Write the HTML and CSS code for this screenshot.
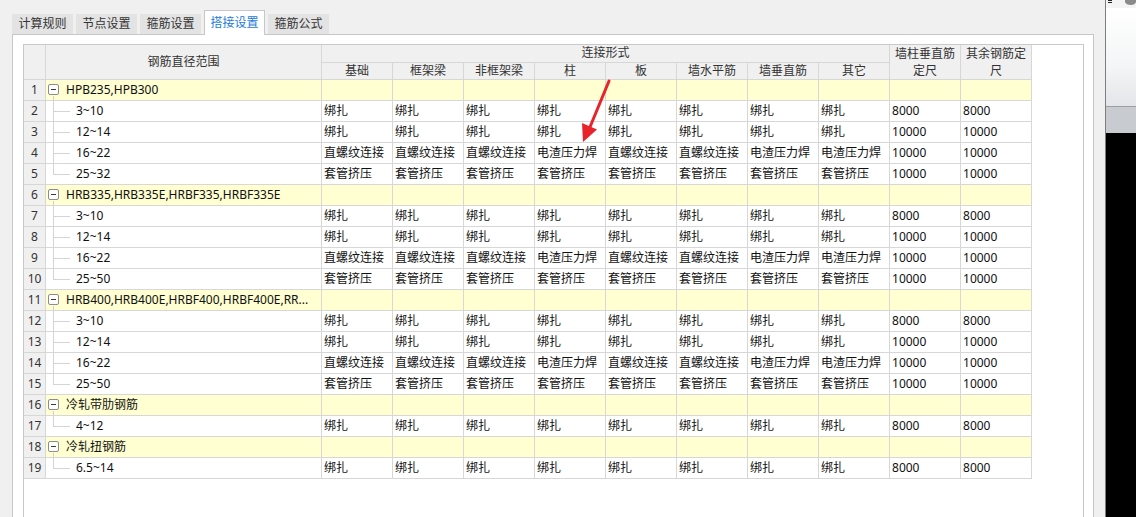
FILE: index.html
```html
<!DOCTYPE html>
<html lang="zh-CN">
<head>
<meta charset="utf-8">
<title>搭接设置</title>
<link rel="stylesheet" href="styles.css">
</head>
<body>
<div class="main">
  <div class="tabs">
    <div class="tab">计算规则</div>
    <div class="tab">节点设置</div>
    <div class="tab">箍筋设置</div>
    <div class="tab active">搭接设置</div>
    <div class="tab">箍筋公式</div>
  </div>
  <div class="panel">
    <div class="grid">
      <table class="sheet">
        <colgroup>
          <col class="c-num"><col class="c-name">
          <col class="c-w"><col class="c-w"><col class="c-w"><col class="c-w"><col class="c-w">
          <col class="c-w"><col class="c-w"><col class="c-w"><col class="c-w"><col class="c-w">
        </colgroup>
        <thead>
          <tr class="h1">
            <th rowspan="2" class="num"></th>
            <th rowspan="2">钢筋直径范围</th>
            <th colspan="8">连接形式</th>
            <th rowspan="2" class="wrap">墙柱垂直筋定尺</th>
            <th rowspan="2" class="wrap">其余钢筋定尺</th>
          </tr>
          <tr class="h2">
            <th>基础</th><th>框架梁</th><th>非框架梁</th><th>柱</th><th>板</th><th>墙水平筋</th><th>墙垂直筋</th><th>其它</th>
          </tr>
        </thead>
        <tbody>
          <tr class="group"><td class="num">1</td><td class="name"><span class="box"></span>HPB235,HPB300</td><td></td><td></td><td></td><td></td><td></td><td></td><td></td><td></td><td></td><td></td></tr>
          <tr><td class="num">2</td><td class="name child">3~10</td><td>绑扎</td><td>绑扎</td><td>绑扎</td><td>绑扎</td><td>绑扎</td><td>绑扎</td><td>绑扎</td><td>绑扎</td><td>8000</td><td>8000</td></tr>
          <tr><td class="num">3</td><td class="name child">12~14</td><td>绑扎</td><td>绑扎</td><td>绑扎</td><td>绑扎</td><td>绑扎</td><td>绑扎</td><td>绑扎</td><td>绑扎</td><td>10000</td><td>10000</td></tr>
          <tr><td class="num">4</td><td class="name child">16~22</td><td>直螺纹连接</td><td>直螺纹连接</td><td>直螺纹连接</td><td>电渣压力焊</td><td>直螺纹连接</td><td>直螺纹连接</td><td>电渣压力焊</td><td>电渣压力焊</td><td>10000</td><td>10000</td></tr>
          <tr><td class="num">5</td><td class="name child last">25~32</td><td>套管挤压</td><td>套管挤压</td><td>套管挤压</td><td>套管挤压</td><td>套管挤压</td><td>套管挤压</td><td>套管挤压</td><td>套管挤压</td><td>10000</td><td>10000</td></tr>

          <tr class="group"><td class="num">6</td><td class="name"><span class="box"></span>HRB335,HRB335E,HRBF335,HRBF335E</td><td></td><td></td><td></td><td></td><td></td><td></td><td></td><td></td><td></td><td></td></tr>
          <tr><td class="num">7</td><td class="name child">3~10</td><td>绑扎</td><td>绑扎</td><td>绑扎</td><td>绑扎</td><td>绑扎</td><td>绑扎</td><td>绑扎</td><td>绑扎</td><td>8000</td><td>8000</td></tr>
          <tr><td class="num">8</td><td class="name child">12~14</td><td>绑扎</td><td>绑扎</td><td>绑扎</td><td>绑扎</td><td>绑扎</td><td>绑扎</td><td>绑扎</td><td>绑扎</td><td>10000</td><td>10000</td></tr>
          <tr><td class="num">9</td><td class="name child">16~22</td><td>直螺纹连接</td><td>直螺纹连接</td><td>直螺纹连接</td><td>电渣压力焊</td><td>直螺纹连接</td><td>直螺纹连接</td><td>电渣压力焊</td><td>电渣压力焊</td><td>10000</td><td>10000</td></tr>
          <tr><td class="num">10</td><td class="name child last">25~50</td><td>套管挤压</td><td>套管挤压</td><td>套管挤压</td><td>套管挤压</td><td>套管挤压</td><td>套管挤压</td><td>套管挤压</td><td>套管挤压</td><td>10000</td><td>10000</td></tr>

          <tr class="group"><td class="num">11</td><td class="name"><span class="box"></span>HRB400,HRB400E,HRBF400,HRBF400E,RR...</td><td></td><td></td><td></td><td></td><td></td><td></td><td></td><td></td><td></td><td></td></tr>
          <tr><td class="num">12</td><td class="name child">3~10</td><td>绑扎</td><td>绑扎</td><td>绑扎</td><td>绑扎</td><td>绑扎</td><td>绑扎</td><td>绑扎</td><td>绑扎</td><td>8000</td><td>8000</td></tr>
          <tr><td class="num">13</td><td class="name child">12~14</td><td>绑扎</td><td>绑扎</td><td>绑扎</td><td>绑扎</td><td>绑扎</td><td>绑扎</td><td>绑扎</td><td>绑扎</td><td>10000</td><td>10000</td></tr>
          <tr><td class="num">14</td><td class="name child">16~22</td><td>直螺纹连接</td><td>直螺纹连接</td><td>直螺纹连接</td><td>电渣压力焊</td><td>直螺纹连接</td><td>直螺纹连接</td><td>电渣压力焊</td><td>电渣压力焊</td><td>10000</td><td>10000</td></tr>
          <tr><td class="num">15</td><td class="name child last">25~50</td><td>套管挤压</td><td>套管挤压</td><td>套管挤压</td><td>套管挤压</td><td>套管挤压</td><td>套管挤压</td><td>套管挤压</td><td>套管挤压</td><td>10000</td><td>10000</td></tr>

          <tr class="group"><td class="num">16</td><td class="name"><span class="box"></span>冷轧带肋钢筋</td><td></td><td></td><td></td><td></td><td></td><td></td><td></td><td></td><td></td><td></td></tr>
          <tr><td class="num">17</td><td class="name child last">4~12</td><td>绑扎</td><td>绑扎</td><td>绑扎</td><td>绑扎</td><td>绑扎</td><td>绑扎</td><td>绑扎</td><td>绑扎</td><td>8000</td><td>8000</td></tr>

          <tr class="group"><td class="num">18</td><td class="name"><span class="box"></span>冷轧扭钢筋</td><td></td><td></td><td></td><td></td><td></td><td></td><td></td><td></td><td></td><td></td></tr>
          <tr><td class="num">19</td><td class="name child last">6.5~14</td><td>绑扎</td><td>绑扎</td><td>绑扎</td><td>绑扎</td><td>绑扎</td><td>绑扎</td><td>绑扎</td><td>绑扎</td><td>8000</td><td>8000</td></tr>
        </tbody>
      </table>
    </div>
  </div>
</div>
<div class="side">
  <div class="side-top">
    <svg class="side-icons" width="29" height="8" viewBox="0 0 29 8">
      <rect x="1" y="0" width="4" height="1" fill="#222"/>
      <rect x="1" y="2" width="4" height="1" fill="#222"/>
      <path d="M18 0 H29 V2 Q28 5 24 5 Q19 5 18 2 Z" fill="#8a8a8a"/>
    </svg>
  </div>
  <div class="side-light"></div>
  <div class="side-bar"></div>
  <div class="side-dark"></div>
</div>
<svg class="arrow" width="1136" height="517" viewBox="0 0 1136 517">
  <line x1="609" y1="81" x2="590" y2="127" stroke="#e8242a" stroke-width="3" stroke-linecap="round"/>
  <polygon points="583,142 582,123 597,129.5" fill="#e8242a"/>
</svg>
</body>
</html>
```
FILE: styles.css
```css
html, body {
  margin: 0;
  padding: 0;
}
body {
  position: relative;
  width: 1136px;
  height: 517px;
  overflow: hidden;
  display: flex;
  background: #f0f0f0;
  font-family: "Noto Sans", "Noto Sans CJK SC", sans-serif;
  font-size: 12px;
  color: #111;
}
.main {
  width: 1105px;
  flex: none;
  box-sizing: border-box;
  padding: 10px 11px 0 12px;
  display: flex;
  flex-direction: column;
}
.tabs {
  display: flex;
  align-items: flex-end;
  gap: 3px;
  height: 24px;
  flex: none;
}
.tab {
  box-sizing: border-box;
  width: 61px;
  height: 20px;
  line-height: 20px;
  text-align: center;
  background: #e3e3e3;
  color: #333;
  white-space: nowrap;
}
.tab.active {
  position: relative;
  height: 25px;
  margin-bottom: -1px;
  line-height: 23px;
  background: #fff;
  border: 1px solid #c6c6cc;
  border-bottom: none;
  color: #1e7bd8;
}
.panel {
  flex: 1;
  background: #fff;
  border: 1px solid #c6c6cc;
  border-bottom: none;
  padding: 9px 9px 0 10px;
  display: flex;
  flex-direction: column;
}
.grid {
  flex: 1;
  border: 1px solid #c9c9c9;
  border-bottom: none;
  background: #fff;
}
.sheet {
  table-layout: fixed;
  border-collapse: separate;
  border-spacing: 0;
  width: 1008px;
}
.c-num { width: 22px; }
.c-name { width: 276px; }
.c-w { width: 71px; }
.sheet th, .sheet td {
  box-sizing: border-box;
  border-right: 1px solid #d7d7d7;
  border-bottom: 1px solid #d7d7d7;
  padding: 0 2px;
  white-space: nowrap;
  overflow: hidden;
}
.sheet th {
  background: #f0f0f0;
  color: #333;
  font-weight: normal;
  text-align: center;
  height: 17px;
  line-height: 16px;
}
.sheet th.wrap {
  white-space: normal;
  line-height: 17px;
  padding: 0;
}
.sheet td {
  height: 21px;
  line-height: 20px;
  text-align: left;
  color: #111;
}
.sheet .num {
  background: #f0f0f0;
  color: #333;
  text-align: center;
  padding: 0;
}
.sheet tr.group td {
  background: #ffffd2;
}
.sheet tr.group td.num {
  background: #f0f0f0;
}
.sheet td.name {
  text-overflow: ellipsis;
  padding-left: 2px;
}
.sheet tr.group td.name {
  background:
    linear-gradient(#cfcfcf, #cfcfcf) 7px 16px / 1px 5px no-repeat,
    #ffffd2;
}
.box {
  display: inline-block;
  box-sizing: border-box;
  width: 11px;
  height: 11px;
  margin-right: 7px;
  vertical-align: -1px;
  border: 1px solid #8c8c8c;
  border-radius: 2px;
  background: linear-gradient(#3a3a3a, #3a3a3a) center / 5px 1px no-repeat, #fff;
}
.sheet td.child {
  padding-left: 30px;
  background:
    linear-gradient(#d4d4d4, #d4d4d4) 7px 0 / 1px 100% no-repeat,
    linear-gradient(#d4d4d4, #d4d4d4) 7px 10px / 17px 1px no-repeat,
    #fff;
}
.sheet td.child.last {
  background:
    linear-gradient(#d4d4d4, #d4d4d4) 7px 0 / 1px 11px no-repeat,
    linear-gradient(#d4d4d4, #d4d4d4) 7px 10px / 17px 1px no-repeat,
    #fff;
}
.side {
  flex: 1;
  display: flex;
  flex-direction: column;
  border-left: 1px solid #7d7d7d;
  box-shadow: inset 1px 0 0 #a9a9a9;
}
.side-top {
  height: 8px;
  flex: none;
  background: #f4f4f4;
}
.side-icons {
  display: block;
  margin-left: 1px;
}
.side-light {
  height: 98px;
  flex: none;
  background: linear-gradient(#ffffff, #f4f5f6 60%, #e3e5e8);
  border-bottom: 1px solid #9b9fa5;
}
.side-bar {
  height: 26px;
  flex: none;
  background: #c8cbd0;
}
.side-dark {
  flex: 1;
  background: #000;
}
.arrow {
  position: absolute;
  left: 0;
  top: 0;
  pointer-events: none;
}
```
